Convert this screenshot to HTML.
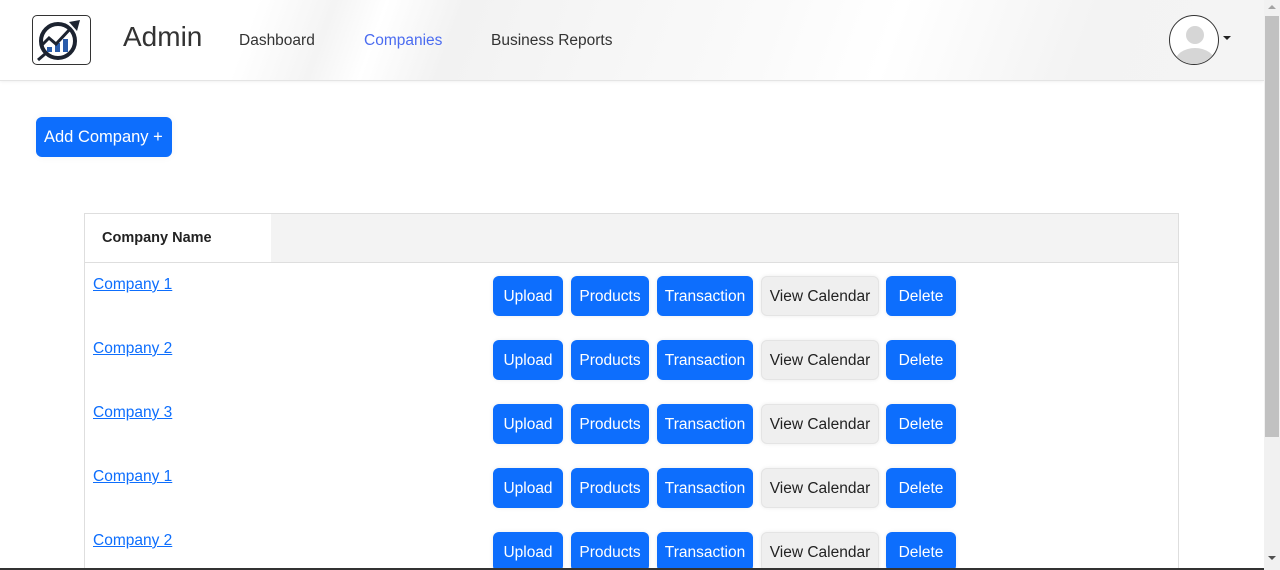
<!DOCTYPE html>
<html><head><meta charset="utf-8">
<style>
*{box-sizing:border-box;margin:0;padding:0}
html,body{width:1280px;height:570px;overflow:hidden;background:#fff;font-family:"Liberation Sans",sans-serif;position:relative}
.hdr{position:absolute;left:0;top:0;width:1264px;height:81px;background:linear-gradient(110deg,#fff 0%,#fff 20%,#f4f4f4 26%,#fff 30%,#f2f2f2 36%,#fafafa 60%,#fff 70%,#f3f3f3 85%,#f4f4f4 100%);border-bottom:1px solid #e4e4e4;box-shadow:0 1px 3px rgba(0,0,0,.06)}
.logo{position:absolute;left:32px;top:15px;width:59px;height:50px;border:1.5px solid #333;border-radius:5px;background:#fff}
.admin{position:absolute;left:123px;top:21px;font-size:28px;color:#333}
.nav{position:absolute;top:32px;font-size:15.5px;color:#333}
.av{position:absolute;left:1169px;top:15px;width:50px;height:50px;border:1px solid #333;border-radius:50%;overflow:hidden;background:#fff}
.caret{position:absolute;left:1223px;top:36px;border-left:4px solid transparent;border-right:4px solid transparent;border-top:4px solid #222}
.add{position:absolute;left:36px;top:117px;width:136px;height:40px;background:#0d6efd;color:#fff;border-radius:6px;font-size:16.5px;line-height:41px;padding-left:8px;box-shadow:0 0 8px rgba(0,0,0,.05)}
.tbl{position:absolute;left:84px;top:213px;width:1095px;height:357px;border:1px solid #dedede;border-bottom:none;overflow:hidden}
.th{height:49px;border-bottom:1px solid #dedede;background:#f3f3f3;position:relative}
.th div{position:absolute;left:0;top:0;width:186px;height:48px;background:#fff;font-weight:bold;font-size:14.5px;color:#222;padding:16px 0 0 17px}
.row{position:absolute;left:0;height:64px;width:100%}
.row a{position:absolute;left:8px;top:12px;color:#0d6efd;text-decoration:underline;font-size:15.5px}
.b{position:absolute;top:12px;height:40px;line-height:41px;text-align:center;border-radius:6px;background:#0d6efd;color:#fff;font-size:15.5px;box-shadow:0 0 4px rgba(0,0,0,.08)}
.g{background:#efefef;color:#222;border:1px solid #e4e4e4;line-height:39px}
.sb{position:absolute;left:1264px;top:0;width:16px;height:570px;background:#f1f1f1}
.th2{position:absolute;left:1265px;top:16px;width:14px;height:421px;background:#c1c1c1}
.bot{position:absolute;left:0;top:568px;width:1264px;height:2px;background:#333}
</style></head><body>
<div class="hdr"></div>
<div class="logo"><svg width="56" height="47" viewBox="0 0 56 47"><circle cx="25" cy="25" r="17" fill="none" stroke="#1c2330" stroke-width="4"/><path d="M14 36 L14 31 L19 31 L19 36Z M22 36 L22 27 L27 27 L27 36Z M30 36 L30 23 L35 23 L35 36Z" fill="#2a5caa"/><path d="M8 30 L16 22 L23 28 L38 12" fill="none" stroke="#1c2330" stroke-width="3"/><path d="M36 6 L47 4 L44 15Z" fill="#1c2330"/><path d="M5 44 L12 38" stroke="#1c2330" stroke-width="3"/></svg></div>
<div class="admin">Admin</div>
<div class="nav" style="left:239px">Dashboard</div>
<div class="nav" style="left:364px;color:#4b6cf0">Companies</div>
<div class="nav" style="left:491px">Business Reports</div>
<div class="av"><svg width="50" height="50"><circle cx="25" cy="19" r="9" fill="#d6d6d6"/><ellipse cx="25" cy="46" rx="20" ry="14" fill="#d6d6d6"/></svg></div>
<div class="caret"></div>
<div class="add">Add Company +</div>
<div class="tbl">
<div class="th"><div>Company Name</div></div>
<div class="row" style="top:50px"><a>Company 1</a><div class="b" style="left:408px;width:70px">Upload</div><div class="b" style="left:486px;width:78px">Products</div><div class="b" style="left:572px;width:96px">Transaction</div><div class="b g" style="left:676px;width:118px">View Calendar</div><div class="b" style="left:801px;width:70px">Delete</div></div>
<div class="row" style="top:114px"><a>Company 2</a><div class="b" style="left:408px;width:70px">Upload</div><div class="b" style="left:486px;width:78px">Products</div><div class="b" style="left:572px;width:96px">Transaction</div><div class="b g" style="left:676px;width:118px">View Calendar</div><div class="b" style="left:801px;width:70px">Delete</div></div>
<div class="row" style="top:178px"><a>Company 3</a><div class="b" style="left:408px;width:70px">Upload</div><div class="b" style="left:486px;width:78px">Products</div><div class="b" style="left:572px;width:96px">Transaction</div><div class="b g" style="left:676px;width:118px">View Calendar</div><div class="b" style="left:801px;width:70px">Delete</div></div>
<div class="row" style="top:242px"><a>Company 1</a><div class="b" style="left:408px;width:70px">Upload</div><div class="b" style="left:486px;width:78px">Products</div><div class="b" style="left:572px;width:96px">Transaction</div><div class="b g" style="left:676px;width:118px">View Calendar</div><div class="b" style="left:801px;width:70px">Delete</div></div>
<div class="row" style="top:306px"><a>Company 2</a><div class="b" style="left:408px;width:70px">Upload</div><div class="b" style="left:486px;width:78px">Products</div><div class="b" style="left:572px;width:96px">Transaction</div><div class="b g" style="left:676px;width:118px">View Calendar</div><div class="b" style="left:801px;width:70px">Delete</div></div>
</div>
<div class="sb"></div><div class="th2"></div>
<div style="position:absolute;left:1268px;top:5px;border-left:4px solid transparent;border-right:4px solid transparent;border-bottom:4px solid #a3a3a3"></div>
<div style="position:absolute;left:1268px;top:556px;border-left:4px solid transparent;border-right:4px solid transparent;border-top:4px solid #505050"></div>
<div class="bot"></div>
</body></html>
